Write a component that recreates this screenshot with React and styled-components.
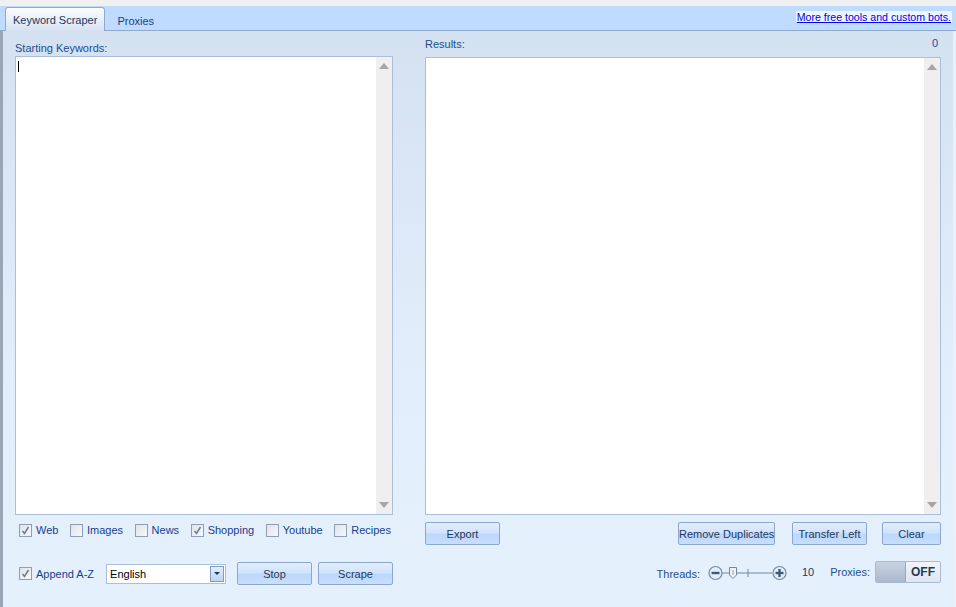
import React from "react";
import styled, { createGlobalStyle } from "styled-components";

const GlobalStyle = createGlobalStyle`
    html, body {
        margin: 0;
        padding: 0;
        background: #f0f0f0;
    }
    body {
        font-family: "Liberation Sans", Arial, sans-serif;
        font-size: 11px;
        color: #1e395b;
        white-space: nowrap;
    }
`;

const Window = styled.div`
    width: 956px;
    height: 607px;
    display: flex;
    flex-direction: column;
    overflow: hidden;
`;

const TitleStrip = styled.div`
    height: 6px;
    background: #f0f0f0;
`;

const TabBar = styled.div`
    height: 24px;
    background: #bfdbff;
    display: flex;
    align-items: flex-end;
    padding-left: 5px;
    border-bottom: 1px solid #8eaacf;
`;

const Tab = styled.div`
    height: ${(p) => (p.$active ? "24px" : "22px")};
    padding: 0 ${(p) => (p.$active ? "7px" : "11px")};
    display: flex;
    align-items: center;
    box-sizing: border-box;
    margin-bottom: -1px;
    border: 1px solid ${(p) => (p.$active ? "#8eaacf" : "transparent")};
    border-bottom: none;
    border-radius: 3px 3px 0 0;
    background: ${(p) => (p.$active ? "linear-gradient(#fbfdff, #d6e2f2)" : "transparent")};
    color: ${(p) => (p.$active ? "#1e395b" : "#15428b")};
    font-size: 11px;
`;

const Spacer = styled.div`
    flex: 1;
`;

const ToolsLink = styled.a`
    align-self: center;
    margin-right: 4px;
    margin-top: -3px;
    padding: 0 1px;
    background: #edf5ff;
    color: #0000ee;
    text-decoration: underline;
    font-size: 10.6px;
`;

const Panel = styled.div`
    flex: 1;
    display: grid;
    grid-template-columns: 378px 516px;
    column-gap: 32px;
    padding-left: 12px;
    border-left: 3px solid #9aa6b5;
    border-right: 3px solid #e9f1fb;
    background: linear-gradient(#d4e1f1, #e3eefc 60%, #e5f0fd);
`;

const Column = styled.div`
    display: flex;
    flex-direction: column;
`;

const LabelRow = styled.div`
    height: ${(p) => p.$h}px;
    box-sizing: border-box;
    padding-top: ${(p) => p.$top}px;
    display: flex;
    justify-content: space-between;
    line-height: 14px;
    color: #1e4e8c;
`;

const Count = styled.span`
    color: #1e4e8c;
    margin-top: -1px;
    margin-right: 3px;
`;

const TextBox = styled.div`
    height: ${(p) => p.$h}px;
    box-sizing: border-box;
    border: 1px solid #a9bfdb;
    background: #fff;
    display: flex;
`;

const TextArea = styled.div`
    flex: 1;
    padding: 4px 2px;
`;

const Caret = styled.div`
    width: 1px;
    height: 11px;
    background: #000;
`;

const ScrollBar = styled.div`
    width: 16px;
    background: #efefef;
    display: flex;
    flex-direction: column;
    justify-content: space-between;
    align-items: center;
    padding: 6px 0;
`;

const Arrow = styled.div`
    width: 0;
    height: 0;
    border-left: 5px solid transparent;
    border-right: 5px solid transparent;
    ${(p) => (p.$up ? "border-bottom: 6px solid #a6a6a6;" : "border-top: 6px solid #a6a6a6;")}
`;

const CheckRow = styled.div`
    margin-top: 8px;
    padding-left: 4px;
    padding-right: 2px;
    display: flex;
    justify-content: space-between;
`;

const CheckLabel = styled.label`
    display: flex;
    align-items: center;
    gap: 4px;
    color: #15428b;
    line-height: 14px;
`;

const Box = styled.span`
    width: 11px;
    height: 11px;
    border: 1px solid #8e9fb5;
    background: linear-gradient(135deg, #dfe4ea, #f6f8fa);
    display: flex;
    align-items: center;
    justify-content: center;
`;

const ControlRow = styled.div`
    margin-top: 25px;
    padding-left: 4px;
    display: flex;
    align-items: center;
`;

const Select = styled.div`
    width: 120px;
    height: 20px;
    box-sizing: border-box;
    margin-left: 12px;
    border: 1px solid #a9bfdb;
    background: #fff;
    display: flex;
    align-items: center;
    color: #000;
    padding-left: 3px;
`;

const SelectText = styled.span`
    flex: 1;
`;

const DropButton = styled.span`
    width: 14px;
    height: 16px;
    margin-right: 1px;
    box-sizing: border-box;
    border: 1px solid #7f9dc0;
    background: linear-gradient(#e2eefc, #bcd5f3);
    display: flex;
    align-items: center;
    justify-content: center;
`;

const SmallArrow = styled.span`
    width: 0;
    height: 0;
    border-left: 3px solid transparent;
    border-right: 3px solid transparent;
    border-top: 3px solid #1e395b;
`;

const Button = styled.button`
    width: ${(p) => p.$w}px;
    height: 23px;
    margin-left: ${(p) => p.$ml || 0}px;
    padding: 0;
    box-sizing: border-box;
    border: 1px solid #8ba8cc;
    border-radius: 2px;
    background: linear-gradient(#e3eefc 0%, #d0e4fe 45%, #bcd7fc 55%, #c8defd 100%);
    font-family: "Liberation Sans", Arial, sans-serif;
    font-size: 11px;
    color: #1e395b;
    white-space: nowrap;
`;

const ButtonRow = styled.div`
    margin-top: 7px;
    display: flex;
    align-items: center;
`;

const StatusRow = styled.div`
    margin-top: 16px;
    display: flex;
    align-items: center;
    justify-content: flex-end;
    color: #1e4e8c;
`;

const StatusLabel = styled.span`
    padding-top: ${(p) => p.$drop || 0}px;
`;

const Slider = styled.div`
    margin: 2px 14px 0 8px;
    display: flex;
    align-items: center;
`;

const Value = styled.span`
    margin-right: 16px;
    color: #1e395b;
`;

const Toggle = styled.div`
    width: 66px;
    height: 22px;
    margin-left: 5px;
    box-sizing: border-box;
    border: 1px solid #a9bbd0;
    border-radius: 2px;
    display: flex;
    overflow: hidden;
`;

const Knob = styled.div`
    width: 29px;
    background: linear-gradient(#c7d3e1, #a9b9cc);
    border-right: 1px solid #97a8bd;
`;

const ToggleText = styled.div`
    flex: 1;
    background: linear-gradient(#f0f4f9, #dde6f0);
    display: flex;
    align-items: center;
    justify-content: center;
    font-weight: bold;
    font-size: 12px;
    color: #1e395b;
`;

const Check = ({ on, label }) => (
    <CheckLabel>
        <Box>
            {on && (
                <svg width="9" height="9" viewBox="0 0 9 9">
                    <path d="M1.5 5 L3.5 7.5 L7.5 1" fill="none" stroke="#6b7c94" strokeWidth="1.5" />
                </svg>
            )}
        </Box>
        {label}
    </CheckLabel>
);

const ThreadSlider = () => (
    <Slider>
        <svg width="80" height="18" viewBox="0 0 80 18">
            <line x1="14" y1="9" x2="64" y2="9" stroke="#6f88aa" strokeWidth="1" />
            <line x1="40" y1="5" x2="40" y2="13" stroke="#6f88aa" strokeWidth="1" />
            <circle cx="7.5" cy="9" r="6.5" fill="#e6edf6" stroke="#6f88aa" strokeWidth="1.2" />
            <rect x="3.5" y="7.8" width="8" height="2.4" fill="#3d5a80" />
            <circle cx="71.5" cy="9" r="6.5" fill="#e6edf6" stroke="#6f88aa" strokeWidth="1.2" />
            <rect x="67.5" y="7.8" width="8" height="2.4" fill="#3d5a80" />
            <rect x="70.3" y="5" width="2.4" height="8" fill="#3d5a80" />
            <path d="M21.5 3.5 H28.5 V11 L25 14.5 L21.5 11 Z" fill="#eef3f9" stroke="#6f88aa" strokeWidth="1" />
            <line x1="25" y1="6" x2="25" y2="11" stroke="#8ea3bf" strokeWidth="1" />
        </svg>
    </Slider>
);

const App = () => {
    return (
        <Window>
            <GlobalStyle />
            <TitleStrip />
            <TabBar>
                <Tab $active>Keyword Scraper</Tab>
                <Tab>Proxies</Tab>
                <Spacer />
                <ToolsLink href="#">More free tools and custom bots.</ToolsLink>
            </TabBar>
            <Panel>
                <Column>
                    <LabelRow $h={25} $top={10}>Starting Keywords:</LabelRow>
                    <TextBox $h={459}>
                        <TextArea>
                            <Caret />
                        </TextArea>
                        <ScrollBar>
                            <Arrow $up />
                            <Arrow />
                        </ScrollBar>
                    </TextBox>
                    <CheckRow>
                        <Check on label="Web" />
                        <Check label="Images" />
                        <Check label="News" />
                        <Check on label="Shopping" />
                        <Check label="Youtube" />
                        <Check label="Recipes" />
                    </CheckRow>
                    <ControlRow>
                        <Check on label="Append A-Z" />
                        <Select>
                            <SelectText>English</SelectText>
                            <DropButton>
                                <SmallArrow />
                            </DropButton>
                        </Select>
                        <Button $w={75} $ml={11}>Stop</Button>
                        <Button $w={75} $ml={6}>Scrape</Button>
                    </ControlRow>
                </Column>
                <Column>
                    <LabelRow $h={26} $top={6}>
                        <span>Results:</span>
                        <Count>0</Count>
                    </LabelRow>
                    <TextBox $h={458}>
                        <TextArea />
                        <ScrollBar>
                            <Arrow $up />
                            <Arrow />
                        </ScrollBar>
                    </TextBox>
                    <ButtonRow>
                        <Button $w={75}>Export</Button>
                        <Spacer />
                        <Button $w={97}>Remove Duplicates</Button>
                        <Button $w={75} $ml={17}>Transfer Left</Button>
                        <Button $w={59} $ml={15}>Clear</Button>
                    </ButtonRow>
                    <StatusRow>
                        <StatusLabel $drop={4}>Threads:</StatusLabel>
                        <ThreadSlider />
                        <Value>10</Value>
                        <StatusLabel>Proxies:</StatusLabel>
                        <Toggle>
                            <Knob />
                            <ToggleText>OFF</ToggleText>
                        </Toggle>
                    </StatusRow>
                </Column>
            </Panel>
        </Window>
    );
};

export default App;
